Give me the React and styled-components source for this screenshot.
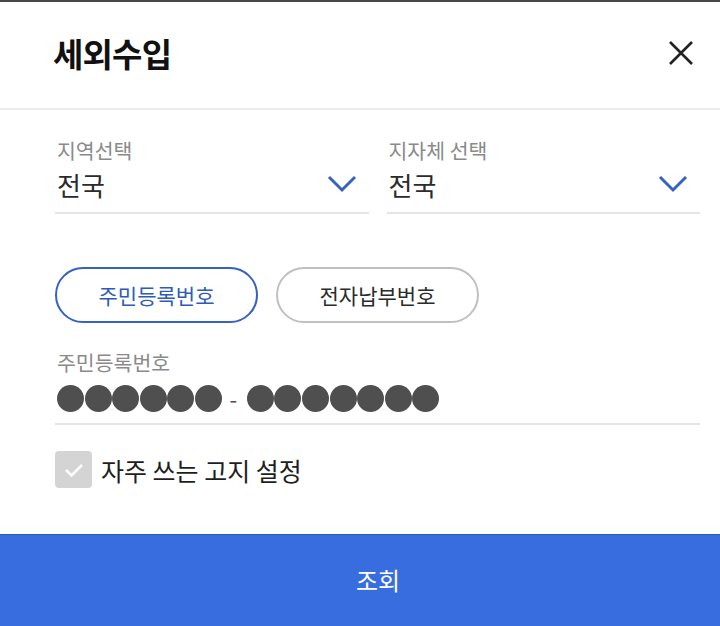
import React from "react";
import styled, { createGlobalStyle } from "styled-components";

const Global = createGlobalStyle`
  html, body { margin: 0; padding: 0; background: #fff; }
  body { font-family: "Noto Sans CJK KR", "Noto Sans", sans-serif; }
`;

const Sheet = styled.div`
  width: 720px;
  height: 626px;
  box-sizing: border-box;
  border-top: 2px solid #474747;
  display: flex;
  flex-direction: column;
  background: #fff;
`;

const Header = styled.header`
  height: 108px;
  box-sizing: border-box;
  border-bottom: 2px solid #ececec;
  display: flex;
  align-items: center;
  justify-content: space-between;
  padding: 0 24px 0 53px;
`;

const Title = styled.h1`
  margin: 0;
  font-size: 33px;
  font-weight: 700;
  color: #111;
  letter-spacing: -0.8px;
  transform: translateY(-2px);
`;

const CloseBtn = styled.button`
  border: 0;
  background: none;
  padding: 0;
  width: 30px;
  height: 30px;
  display: flex;
  align-items: center;
  justify-content: center;
  cursor: pointer;
  transform: translateY(-2px);
`;

const Body = styled.main`
  flex: 1;
  padding: 26px 20px 0 55px;
  display: flex;
  flex-direction: column;
`;

const SelectRow = styled.div`
  display: grid;
  grid-template-columns: 1fr 1fr;
  gap: 18px;
`;

const Field = styled.div`
  display: flex;
  flex-direction: column;
  border-bottom: 2px solid #e4e4e4;
  padding-left: 2px;
`;

const Label = styled.div`
  font-size: 20.5px;
  line-height: 28px;
  color: #8a8a8a;
`;

const ValueRow = styled.div`
  display: flex;
  align-items: center;
  justify-content: space-between;
  height: 40px;
  padding-bottom: 8px;
`;

const Value = styled.span`
  font-size: 26px;
  color: #2b2b2b;
`;

const Chevron = styled.svg`
  margin-right: 12px;
  flex: none;
`;

const Tabs = styled.div`
  display: flex;
  gap: 18px;
  margin-top: 53px;
`;

const Pill = styled.button`
  width: 203px;
  height: 56px;
  box-sizing: border-box;
  border-radius: 28px;
  background: #fff;
  border: 2.5px solid ${(p) => (p.$active ? "#3562c4" : "#c0c0c0")};
  color: ${(p) => (p.$active ? "#2f5bb8" : "#2b2b2b")};
  font-family: inherit;
  font-size: 21px;
  padding: 0;
  cursor: pointer;
`;

const IdField = styled.div`
  margin-top: 25px;
  padding-left: 2px;
  border-bottom: 2px solid #e4e4e4;
  display: flex;
  flex-direction: column;
`;

const DotRow = styled.div`
  display: flex;
  align-items: center;
  gap: 0.6px;
  height: 38px;
  padding-bottom: 6px;
  margin-top: 3px;
`;

const Dot = styled.span`
  width: 27px;
  height: 27px;
  border-radius: 50%;
  background: #4f4f4f;
  flex: none;
`;

const Dash = styled.span`
  font-size: 22px;
  color: #4f4f4f;
  margin: 0 9px 0 7px;
  line-height: 1;
`;

const CheckRow = styled.label`
  display: flex;
  align-items: center;
  gap: 9px;
  margin-top: 26px;
`;

const Box = styled.span`
  width: 37px;
  height: 37px;
  border-radius: 4px;
  background: #d4d4d4;
  display: flex;
  align-items: center;
  justify-content: center;
`;

const CheckText = styled.span`
  font-size: 25px;
  color: #1e1e1e;
`;

const Submit = styled.button`
  height: 92px;
  width: 100%;
  border: 0;
  border-top: 1px solid #2b58c0;
  background: #386de0;
  color: #fff;
  font-family: inherit;
  font-size: 24px;
  cursor: pointer;
  padding: 0 0 2px 36px;
`;

const ChevronIcon = () => (
  <Chevron width="30" height="18" viewBox="0 0 30 18">
    <path d="M2 2 L15 15 L28 2" fill="none" stroke="#3562c4" strokeWidth="3" />
  </Chevron>
);

const Select = ({ label, value }) => (
  <Field>
    <Label>{label}</Label>
    <ValueRow>
      <Value>{value}</Value>
      <ChevronIcon />
    </ValueRow>
  </Field>
);

export default function App() {
  return (
    <>
      <Global />
      <Sheet>
        <Header>
          <Title>세외수입</Title>
          <CloseBtn aria-label="닫기">
            <svg width="26" height="26" viewBox="0 0 26 26">
              <path d="M2 2 L24 24 M24 2 L2 24" stroke="#222" strokeWidth="2.6" />
            </svg>
          </CloseBtn>
        </Header>
        <Body>
          <SelectRow>
            <Select label="지역선택" value="전국" />
            <Select label="지자체 선택" value="전국" />
          </SelectRow>
          <Tabs>
            <Pill $active>주민등록번호</Pill>
            <Pill>전자납부번호</Pill>
          </Tabs>
          <IdField>
            <Label>주민등록번호</Label>
            <DotRow>
              {Array.from({ length: 6 }).map((_, i) => (
                <Dot key={"a" + i} />
              ))}
              <Dash>-</Dash>
              {Array.from({ length: 7 }).map((_, i) => (
                <Dot key={"b" + i} />
              ))}
            </DotRow>
          </IdField>
          <CheckRow>
            <Box>
              <svg width="20" height="16" viewBox="0 0 20 16">
                <path d="M2 8 L7.5 13.5 L18 3" fill="none" stroke="#fff" strokeWidth="2.5" />
              </svg>
            </Box>
            <CheckText>자주 쓰는 고지 설정</CheckText>
          </CheckRow>
        </Body>
        <Submit>조회</Submit>
      </Sheet>
    </>
  );
}
